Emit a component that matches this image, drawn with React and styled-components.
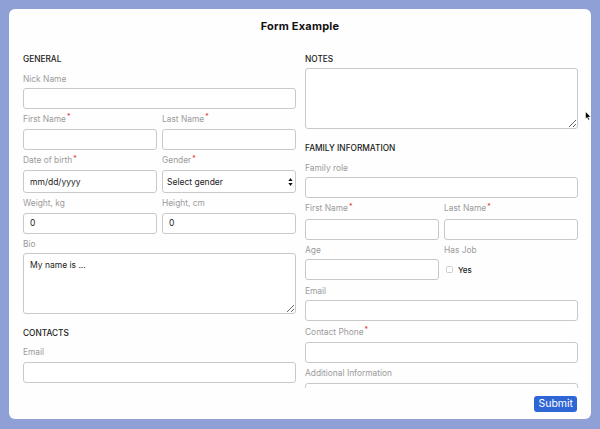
import React from 'react';
import styled, { createGlobalStyle } from 'styled-components';

const GlobalStyle = createGlobalStyle`
  html, body { margin: 0; padding: 0; background: #8fa0d6; }
  body { font-family: Inter, "Noto Sans", sans-serif; }
  *, *::before, *::after { box-sizing: border-box; }
`;

const Page = styled.div`
  position: relative;
  width: 600px;
  height: 429px;
  padding: 9px 9px 10px 9px;
  background: #8fa0d6;
`;

const Card = styled.form`
  height: 410px;
  background: #fefefe;
  border-radius: 6px;
  display: flex;
  flex-direction: column;
  overflow: hidden;
`;

const Header = styled.header`
  height: 33px;
  flex: none;
  display: flex;
  align-items: center;
  justify-content: center;
`;

const Title = styled.h1`
  margin: 0;
  font-size: 11px;
  font-weight: 700;
  color: #111;
  letter-spacing: 0.2px;
`;

const Body = styled.div`
  flex: 1;
  min-height: 0;
  overflow: hidden;
  display: grid;
  grid-template-columns: 1fr 1fr;
  column-gap: 9px;
  align-items: start;
  padding: 10px 13px 0 14px;
`;

const Column = styled.div`
  display: flex;
  flex-direction: column;
`;

const SectionTitle = styled.h2`
  margin: 0 0 2px;
  font-size: 8.3px;
  line-height: 14px;
  font-weight: 500;
  color: #1b1b1b;
  text-transform: uppercase;
  &:not(:first-child) { margin-top: 12px; }
`;

const Field = styled.div`
  margin-top: ${p => (p.$tight ? '3px' : '3.5px')};
  display: flex;
  flex-direction: column;
  min-width: 0;
`;

const Label = styled.label`
  font-size: 8.4px;
  line-height: 14.3px;
  color: #9b9b9b;
  margin-bottom: 2px;
  white-space: nowrap;
`;

const Star = styled.span`
  color: #e0322f;
  font-size: 7px;
  position: relative;
  top: -2.5px;
  margin-left: 1px;
`;

const Row = styled.div`
  display: grid;
  grid-template-columns: 1fr 1fr;
  column-gap: 5px;
`;

const Input = styled.input`
  display: block;
  width: 100%;
  height: ${p => (p.$tall ? '23px' : '21px')};
  border: 1px solid #c9c9c9;
  border-radius: 3px;
  padding: 0 6px;
  font-family: inherit;
  font-size: 8.5px;
  color: #222;
  background: #fff;
  outline: none;
  &::placeholder { color: #222; opacity: 1; }
`;

const TextArea = styled.textarea`
  display: block;
  width: 100%;
  height: 61px;
  border: 1px solid #c9c9c9;
  border-radius: 3px;
  padding: 6px 6px;
  font-family: inherit;
  font-size: 8.5px;
  line-height: 10px;
  color: #222;
  background: #fff;
  outline: none;
`;

const SelectWrap = styled.div`
  position: relative;
  height: 23px;
`;

const Select = styled.select`
  display: block;
  appearance: none;
  -webkit-appearance: none;
  width: 100%;
  height: 23px;
  border: 1px solid #c9c9c9;
  border-radius: 3px;
  padding: 0 4px;
  font-family: inherit;
  font-size: 8.5px;
  color: #222;
  background: #fff;
  outline: none;
`;

const Arrows = styled.svg`
  position: absolute;
  right: 3px;
  top: 50%;
  transform: translateY(-50%);
  pointer-events: none;
`;

const CheckRow = styled.label`
  height: 21px;
  display: flex;
  align-items: center;
  gap: 5px;
  padding-left: 2px;
  font-size: 8px;
  font-weight: 500;
  color: #222;
`;

const Check = styled.input`
  appearance: none;
  -webkit-appearance: none;
  margin: 0;
  width: 7px;
  height: 7px;
  border: 1px solid #cfcfcf;
  border-radius: 1.5px;
  background: #fff;
`;

const Footer = styled.footer`
  height: 31px;
  flex: none;
  display: flex;
  align-items: center;
  justify-content: flex-end;
  padding-right: 14px;
`;

const SubmitButton = styled.button`
  height: 16px;
  padding: 0 4px;
  border: none;
  border-radius: 3px;
  background: #2f66d5;
  color: #fff;
  font-family: inherit;
  font-size: 10.5px;
  line-height: 16px;
  cursor: pointer;
`;

const Cursor = styled.svg`
  position: absolute;
  left: 585px;
  top: 111px;
`;

const Req = () => <Star>*</Star>;

function TextField({ label, required, tall, value, placeholder, tight }) {
  return (
    <Field $tight={tight}>
      <Label>{label}{required && <Req />}</Label>
      <Input $tall={tall} type="text" defaultValue={value} placeholder={placeholder} />
    </Field>
  );
}

export default function App() {
  return (
    <Page>
      <GlobalStyle />
      <Card onSubmit={e => e.preventDefault()}>
        <Header>
          <Title>Form Example</Title>
        </Header>
        <Body>
          <Column>
            <SectionTitle>General</SectionTitle>
            <TextField label="Nick Name" />
            <Row>
              <TextField label="First Name" required tight />
              <TextField label="Last Name" required tight />
            </Row>
            <Row>
              <TextField label="Date of birth" required tall placeholder="mm/dd/yyyy" tight />
              <Field $tight>
                <Label>Gender<Req /></Label>
                <SelectWrap>
                  <Select defaultValue="">
                    <option value="">Select gender</option>
                    <option value="m">Male</option>
                    <option value="f">Female</option>
                  </Select>
                  <Arrows width="5" height="9" viewBox="0 0 5 9">
                    <path d="M2.5 0.5 L4.6 3.6 L0.4 3.6 Z" fill="#111" />
                    <path d="M2.5 8.5 L4.6 5.4 L0.4 5.4 Z" fill="#111" />
                  </Arrows>
                </SelectWrap>
              </Field>
            </Row>
            <Row>
              <TextField label="Weight, kg" value="0" tight />
              <TextField label="Height, cm" value="0" tight />
            </Row>
            <Field $tight>
              <Label>Bio</Label>
              <TextArea defaultValue="My name is ..." />
            </Field>
            <SectionTitle>Contacts</SectionTitle>
            <TextField label="Email" />
          </Column>
          <Column>
            <SectionTitle>Notes</SectionTitle>
            <TextArea />
            <SectionTitle>Family Information</SectionTitle>
            <TextField label="Family role" />
            <Row>
              <TextField label="First Name" required />
              <TextField label="Last Name" required />
            </Row>
            <Row>
              <TextField label="Age" />
              <Field>
                <Label>Has Job</Label>
                <CheckRow>
                  <Check type="checkbox" />
                  Yes
                </CheckRow>
              </Field>
            </Row>
            <TextField label="Email" />
            <TextField label="Contact Phone" required />
            <TextField label="Additional Information" />
          </Column>
        </Body>
        <Footer>
          <SubmitButton type="submit">Submit</SubmitButton>
        </Footer>
      </Card>
      <Cursor width="7" height="10" viewBox="0 0 7 10">
        <path d="M0.5 0.5 L0.5 8 L2.2 6.4 L3.4 9.2 L4.6 8.7 L3.5 6 L5.8 6 Z" fill="#000" stroke="#fff" strokeWidth="0.6" />
      </Cursor>
    </Page>
  );
}
